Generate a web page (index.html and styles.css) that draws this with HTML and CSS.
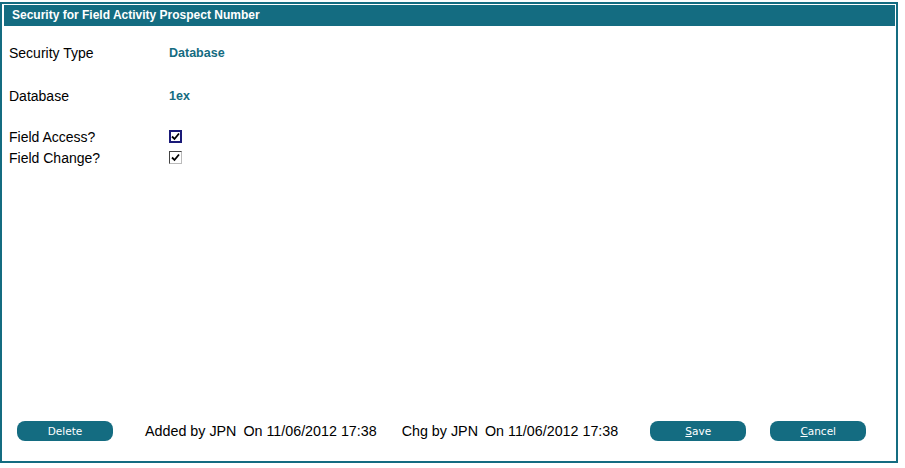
FILE: index.html
```html
<!DOCTYPE html>
<html lang="en">
<head>
    <meta charset="UTF-8">
    <title>Security for Field Activity Prospect Number</title>
    <link rel="stylesheet" href="styles.css">
</head>
<body>
    <div class="frame">
        <div class="title-bar">Security for Field Activity Prospect Number</div>

        <div class="content">
            <div class="row">
                <span class="label">Security Type</span>
                <span class="value">Database</span>
            </div>
            <div class="row">
                <span class="label">Database</span>
                <span class="value">1ex</span>
            </div>
            <div class="checks">
                <div class="row check-row">
                    <span class="label">Field Access?</span>
                    <span class="check focused">
                        <svg width="9" height="9" viewBox="0 0 9 9"><path d="M1 4.5 L3.5 7 L8 1.5" fill="none" stroke="#000" stroke-width="1.8"/></svg>
                    </span>
                </div>
                <div class="row check-row">
                    <span class="label">Field Change?</span>
                    <span class="check">
                        <svg width="9" height="9" viewBox="0 0 9 9"><path d="M1 4.5 L3.5 7 L8 1.5" fill="none" stroke="#000" stroke-width="1.8"/></svg>
                    </span>
                </div>
            </div>
        </div>

        <div class="footer">
            <button class="btn">Delete</button>
            <span class="audit">Added by JPN <span class="on">On</span> 11/06/2012 17:38</span>
            <span class="audit chg">Chg by JPN <span class="on">On</span> 11/06/2012 17:38</span>
            <button class="btn save"><u>S</u>ave</button>
            <button class="btn cancel"><u>C</u>ancel</button>
        </div>
    </div>
</body>
</html>
```

FILE: styles.css
```css
body {
    margin: 0;
    padding: 0;
    background: #fff;
    font-family: "Liberation Sans", Arial, sans-serif;
    color: #000;
}
.frame {
    margin-top: 2px;
    width: 894px;
    height: 457px;
    border: 2px solid #146c81;
    display: flex;
    flex-direction: column;
}
.title-bar {
    margin: 1px 1px 0 2px;
    height: 21px;
    line-height: 20px;
    background-color: #146c81;
    color: #fff;
    font-size: 12px;
    font-weight: bold;
    padding-left: 8px;
}
.content {
    padding: 16px 0 0 7px;
}
.row {
    display: grid;
    grid-template-columns: 160px auto;
    align-items: center;
    height: 21px;
    margin-bottom: 22px;
}
.label {
    font-size: 14px;
}
.value {
    font-size: 12.5px;
    font-weight: bold;
    color: #146c81;
}
.checks {
    margin-top: -2px;
}
.check-row {
    margin-bottom: 0;
}
.check {
    box-sizing: border-box;
    width: 13px;
    height: 13px;
    border: 1px solid #444;
    border-right-color: #bbb;
    border-bottom-color: #bbb;
    display: flex;
    align-items: center;
    justify-content: center;
}
.check.focused {
    border: 2px solid #1a1a78;
}
.footer {
    margin-top: auto;
    margin-bottom: 20px;
    display: flex;
    align-items: center;
    padding-left: 15px;
}
.btn {
    width: 96px;
    height: 20px;
    border: none;
    border-radius: 8px;
    background-color: #146c81;
    color: #fff;
    font-family: "DejaVu Sans", sans-serif;
    font-size: 10.5px;
    padding: 0;
}
.audit {
    font-size: 14.3px;
    margin-left: 32px;
}
.on {
    margin-left: 3px;
}
.audit.chg {
    margin-left: 25px;
}
.save {
    margin-left: 32px;
}
.cancel {
    margin-left: 24px;
}
```
